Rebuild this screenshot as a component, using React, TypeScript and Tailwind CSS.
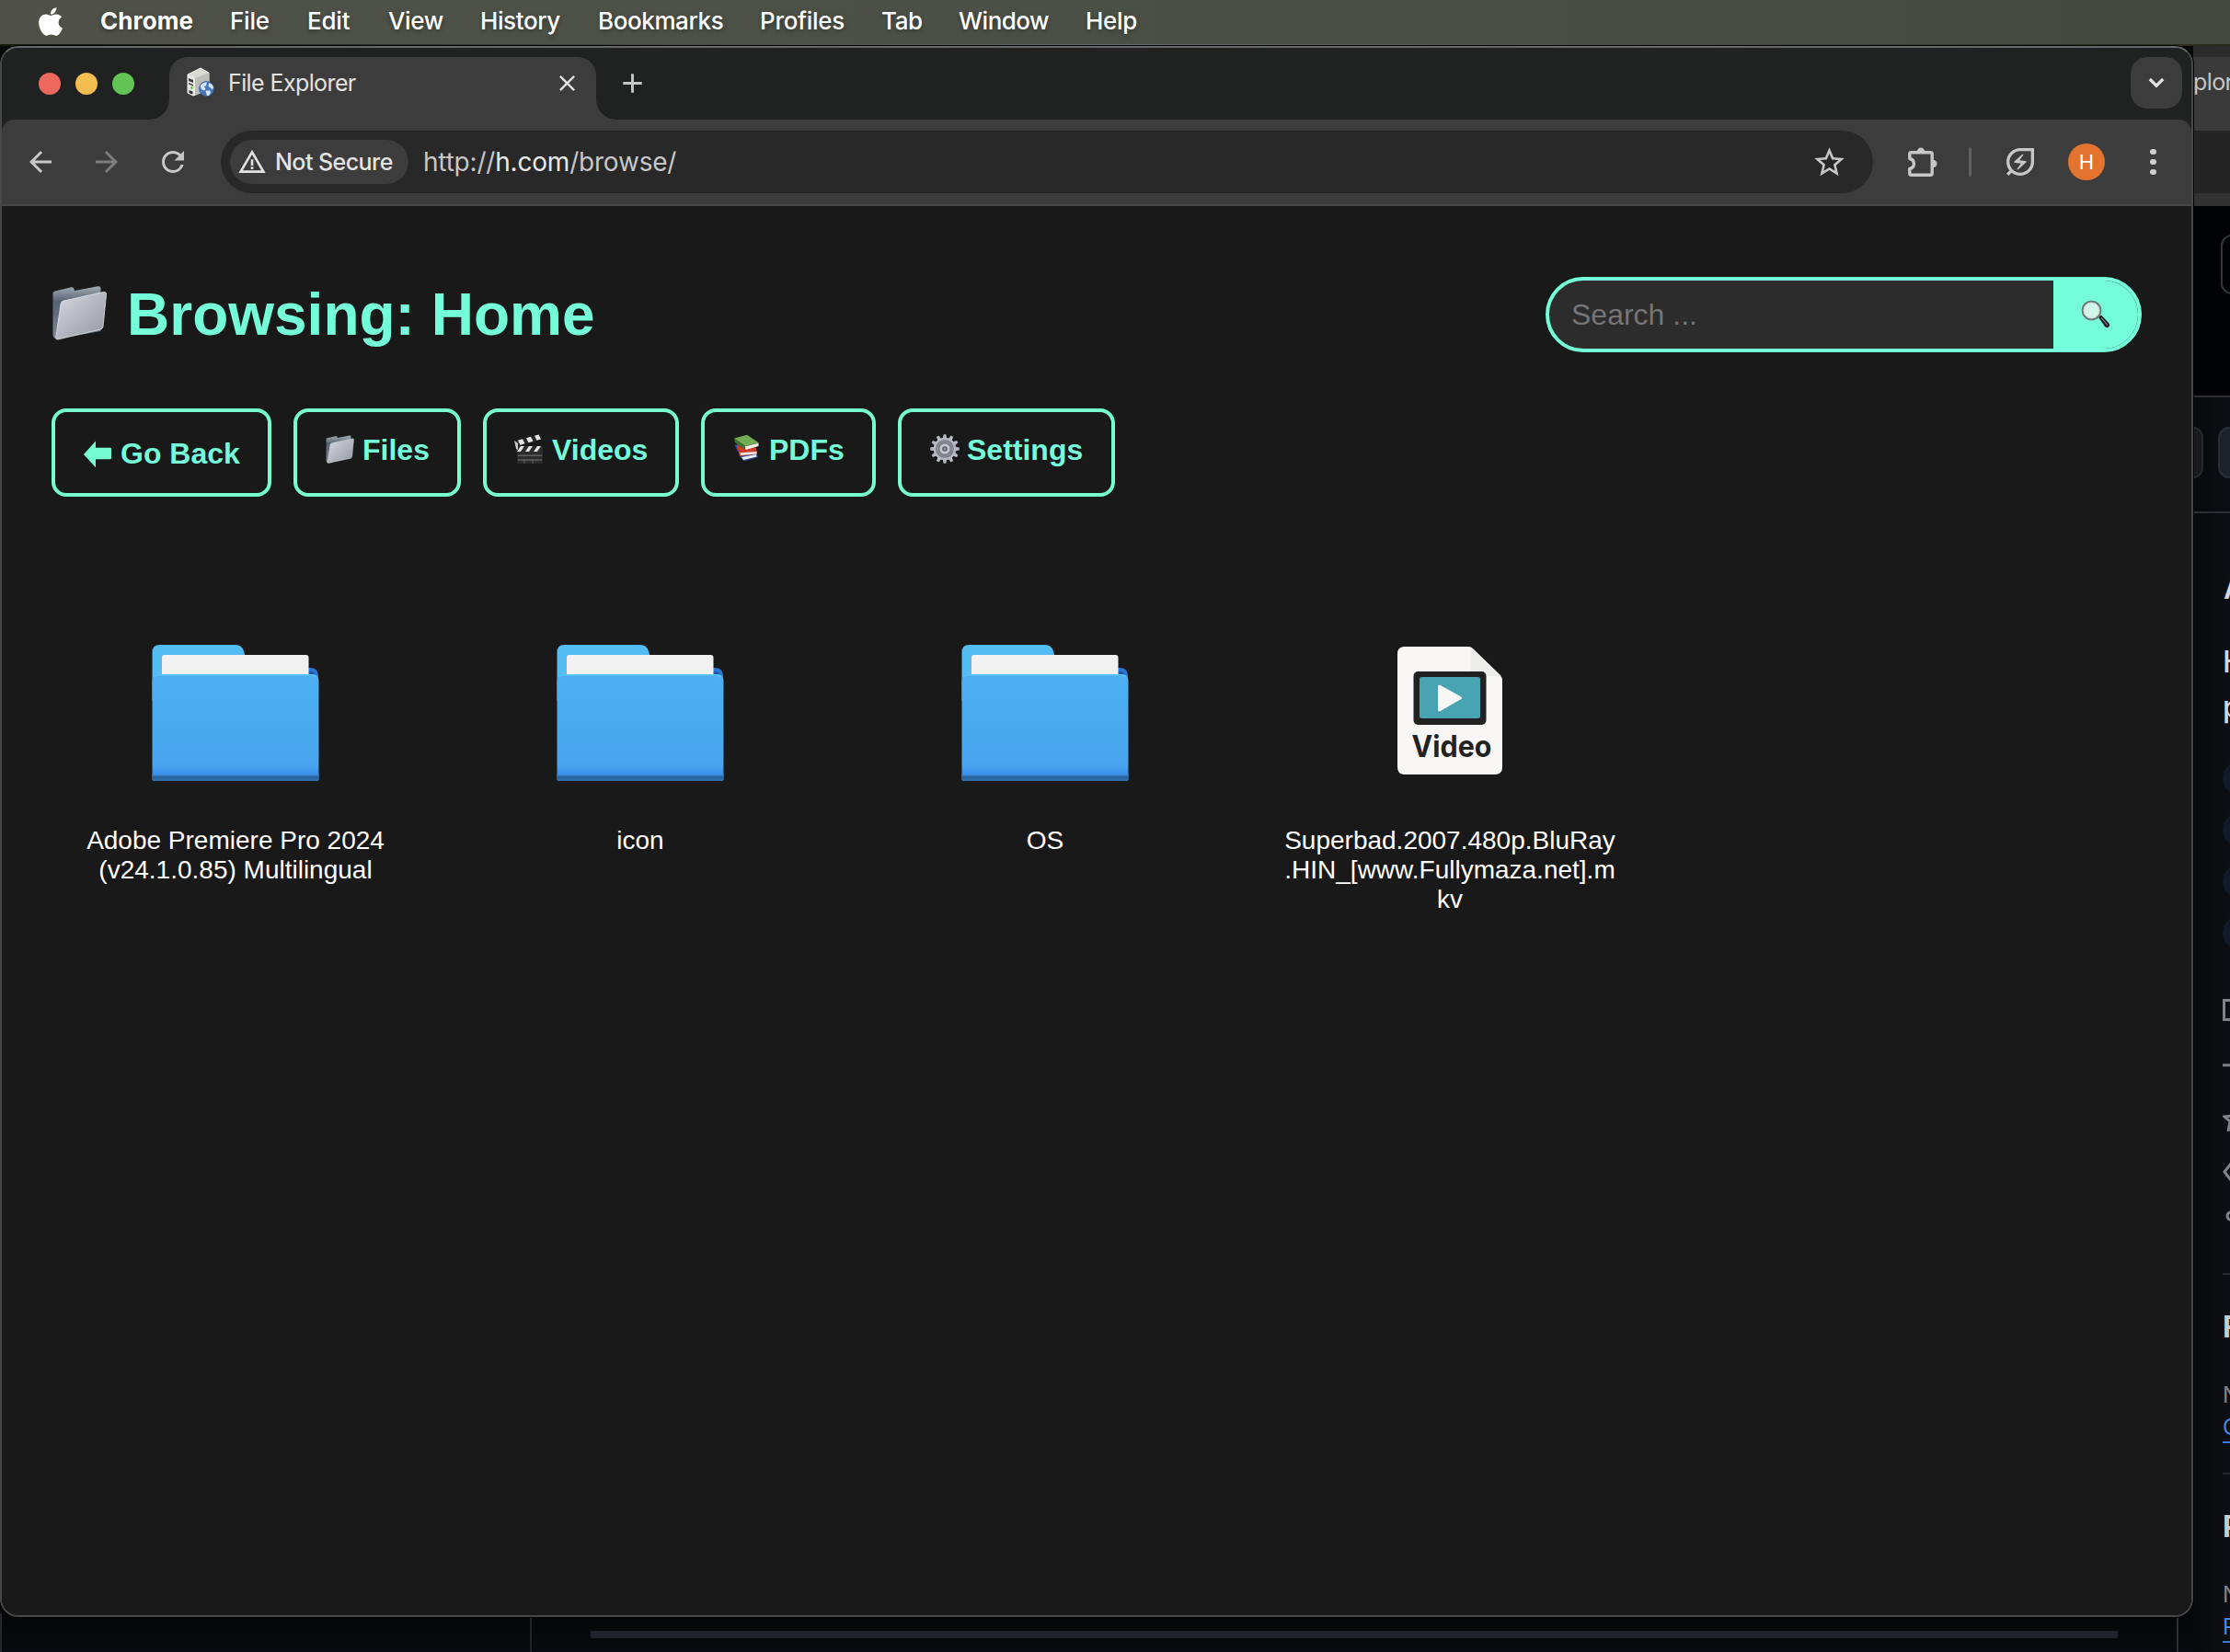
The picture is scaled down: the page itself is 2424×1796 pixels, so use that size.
import React from "react";
import { FaApple } from "react-icons/fa";
import {
  MdAdd,
  MdArrowBack,
  MdArrowForward,
  MdClose,
  MdOutlineEnergySavingsLeaf,
  MdRefresh,
  MdStarBorder,
  MdWarningAmber,
} from "react-icons/md";

const menus = [
  { label: "Chrome", cls: "w-[141px] font-bold tracking-[0.1px]" },
  { label: "File", cls: "w-[84px] font-medium tracking-[-0.2px]" },
  { label: "Edit", cls: "w-[88px] font-medium tracking-[-0.2px]" },
  { label: "View", cls: "w-[100px] font-medium tracking-[-0.4px]" },
  { label: "History", cls: "w-[128px] font-medium tracking-[-0.4px]" },
  { label: "Bookmarks", cls: "w-[176px] font-medium tracking-[-0.4px]" },
  { label: "Profiles", cls: "w-[132px] font-medium tracking-[-0.3px]" },
  { label: "Tab", cls: "w-[84px] font-medium tracking-[-0.4px]" },
  { label: "Window", cls: "w-[138px] font-medium tracking-[-0.5px]" },
  { label: "Help", cls: "font-medium tracking-[-0.3px]" },
];

function MenuBar() {
  return (
    <div className="flex h-12 items-center bg-linear-to-r from-[#4f5148] via-[#4b5046] to-[#45483f] text-[26px] leading-none text-white [text-shadow:0_2px_5px_rgba(0,0,0,0.35)]">
      <FaApple className="mr-[38px] ml-[39px] h-[35px] w-[32px] -translate-y-[1px]" />
      {menus.map((m) => (
        <span key={m.label} className={`${m.cls} -translate-y-[1px] whitespace-nowrap`}>
          {m.label}
        </span>
      ))}
    </div>
  );
}

function ServerIcon() {
  return (
    <svg viewBox="0 0 32 34" className="h-[34px] w-8">
      <path d="M2 8 16 1l9 5v18L8 31l-6-3z" fill="#d9d9d6" stroke="#f3f3f1" strokeWidth="1" />
      <path d="M2 8l8 4v19l-8-3z" fill="#e9e9e6" />
      <path d="M10 12l15-6v18L10 31z" fill="#bdbdb9" />
      <path d="M3 12l5 2v3l-5-2zM3 17l5 2v1.500l-5-2z" fill="#3c3c3c" />
      <circle cx="6.500" cy="22.500" r="1.500" fill="#7ac943" />
      <path d="M3.500 25l4 1.500v3l-4-1.500z" fill="#333" />
      <circle cx="22.500" cy="23.500" r="8" fill="#4877bd" stroke="#2f5596" strokeWidth=".6" />
      <path d="M16 20c2-3 5-4 7-3.500l-1 3.500-2 1 1.500 3-2 1.500-3-2zM25 17.500c3 0 5 2.500 5 5.500l-2 1-1.500-2-2-1zM21.500 25.500l4.500 0 1 2-2 3.500h-2z" fill="#dbe9f7" />
    </svg>
  );
}

function PuzzleIcon() {
  return (
    <svg viewBox="0 0 34 34" className="h-[34px] w-[34px]">
      <path
        d="M4.500 6.800H25.500Q27.200 6.800 27.200 8.500V29.500Q27.200 31.200 25.500 31.200H4.500Q2.800 31.200 2.800 29.500V24.500A5.600 5.600 0 0 0 2.800 13.500V8.500Q2.800 6.800 4.500 6.800Z"
        fill="none"
        stroke="#c7c7c7"
        strokeWidth="3.400"
        strokeLinejoin="round"
      />
      <path d="M10.800 6a4.200 4.600 0 0 1 8.400 0zM28 14.800a4.600 4.200 0 0 1 0 8.400z" fill="#c7c7c7" />
    </svg>
  );
}

function SilverFolder({ id, className }: { id: string; className: string }) {
  return (
    <svg viewBox="0 0 60 60" className={className}>
      <defs>
        <linearGradient id={`${id}-f`} x1="0" y1="0" x2="1" y2="1">
          <stop offset="0" stopColor="#d8dbe3" />
          <stop offset=".5" stopColor="#b4b7bf" />
          <stop offset="1" stopColor="#96999f" />
        </linearGradient>
        <linearGradient id={`${id}-b`} x1="0" y1="0" x2="0" y2="1">
          <stop offset="0" stopColor="#a2abb3" />
          <stop offset=".3" stopColor="#54616f" />
          <stop offset="1" stopColor="#7f8993" />
        </linearGradient>
      </defs>
      <path d="M1 9Q1 7 3 6.500L21 2.200Q23.500 1.800 24 4l.5 2L50 1.200Q53 .8 53 3.500V50L5 58.500Q1 58 1 53z" fill={`url(#${id}-b)`} />
      <path d="M9.500 20.500Q10 17.500 12.500 17L56 7.500Q59.500 7 59 10.500L55.500 45Q55.200 47.500 53 48L6.500 59Q4 59.500 4.300 56.500z" fill={`url(#${id}-f)`} stroke="#dfe2e8" strokeWidth=".8" />
    </svg>
  );
}

function Clapper() {
  return (
    <svg viewBox="0 0 32 34" className="h-[34px] w-8">
      <path d="M1 8.500 28.500 1l1.500 5.500L3 14z" fill="#2a2a2a" />
      <path d="M4 7.700l5-1.400 2.500 5-5 1.400zM13 5.200l5-1.400 2.500 5-5 1.400zM22 2.800l4.500-1.200 2.500 5-4.500 1.200z" fill="#e4e4e4" />
      <rect x="3" y="14" width="28" height="19" rx="1.500" fill="#2c2c2c" />
      <path d="M3 20l4-6h4l-4 6zM12 20l4-6h4l-4 6zM21 20l4-6h4l-4 6z" fill="#e4e4e4" />
      <path d="M4 24.200h26M4 29h26" stroke="#777" strokeWidth="1" />
      <path d="M11 29v4M20 29v4" stroke="#6c6c6c" strokeWidth=".8" />
      <path d="M0 8l4 3 0 7-2-1z" fill="#c9c9c9" />
    </svg>
  );
}

function Books() {
  return (
    <svg viewBox="0 0 30 30" className="h-[30px] w-[30px]">
      <path d="M7 24l2-3 16-2 2 6-15 4.500z" fill="#2b4c9b" />
      <path d="M9 25l16-3 .5 2.500L11 28z" fill="#ececec" />
      <path d="M1.500 12l4-1 6 9-4 3z" fill="#2f55a8" />
      <path d="M4 12l21 2.500 1 7-19 2.500z" fill="#cf3a29" />
      <path d="M7.500 20.200l18-1.200v2.500l-17.500 1.500z" fill="#f0e7e4" />
      <path d="M1 4.500 15 .8 28 9.500 13 13z" fill="#72ac53" />
      <path d="M1 4.500 13 13v4L2 9z" fill="#3f7330" />
      <path d="M13 13.200l14.500-3.400v3.200L13.500 17z" fill="#f3f3ee" />
    </svg>
  );
}

function Gear() {
  const teeth = Array.from({ length: 12 }, (_, i) => i * 30);
  return (
    <svg viewBox="0 0 32 32" className="h-8 w-8">
      {teeth.map((a) => (
        <path key={a} d="M13.800 5 14.600.2h2.800L18.200 5z" fill="#b6bac4" transform={`rotate(${a} 16 16)`} />
      ))}
      <circle cx="16" cy="16" r="11" fill="#6d7077" stroke="#b6bac4" strokeWidth="2.400" />
      <circle cx="16" cy="16" r="8.400" fill="#7e8187" stroke="#94979e" strokeWidth="1" />
      <circle cx="16" cy="16" r="4.200" fill="#4c4e54" stroke="#c4c8d1" strokeWidth="2.800" />
      <circle cx="16" cy="16" r="1.800" fill="#8c8f96" />
    </svg>
  );
}

function Magnifier() {
  return (
    <svg viewBox="0 0 34 34" className="h-[34px] w-[34px]">
      <path d="M20 20l3-2.500 8.500 9q1.500 2.500-.5 4t-4-.5z" fill="#1e1e22" />
      <path d="M23 20.500l7 8" stroke="#77777c" strokeWidth="1.200" />
      <circle cx="12.500" cy="12.500" r="9.800" fill="#d2f6ea" stroke="#6e7375" strokeWidth="2" />
      <circle cx="12.500" cy="12.500" r="8.600" fill="none" stroke="#c3cccb" strokeWidth="1" />
    </svg>
  );
}

function BlueFolder({ id }: { id: string }) {
  return (
    <svg viewBox="0 0 182 148" className="h-[148px] w-[182px]">
      <defs>
        <linearGradient id={`${id}-g`} x1="0" y1="0" x2="0" y2="1">
          <stop offset="0" stopColor="#4cb0f3" />
          <stop offset=".6" stopColor="#49a9ee" />
          <stop offset=".85" stopColor="#48a4ef" />
          <stop offset=".94" stopColor="#3b90e8" />
          <stop offset="1" stopColor="#3a8fe8" />
        </linearGradient>
        <linearGradient id={`${id}-s`} x1="0" y1="0" x2="0" y2="1">
          <stop offset="0" stopColor="#3a8de2" />
          <stop offset=".4" stopColor="#2a6298" />
          <stop offset="1" stopColor="#2e74b3" />
        </linearGradient>
      </defs>
      <path d="M.5 8Q.5 0 8.500 0H91Q98 0 100 7L102 14V60H.5z" fill="#53bcf2" />
      <path d="M165 25H172Q181 25 181 34V60H165z" fill="#2a76d2" />
      <path d="M168 29H173Q178 30 179 36H168z" fill="#1f56a6" />
      <rect x="11" y="11" width="159.500" height="40" rx="3" fill="#f1f1f1" />
      <path d="M0.500 40Q1 32 6 32H175Q181 32 181.500 40V146Q181.500 148 179.500 148H2.500Q.5 148 .5 146z" fill={`url(#${id}-g)`} />
      <path d="M3 35Q4 32.800 8 32.800H173Q178 32.800 179 35" fill="none" stroke="#5dc3f6" strokeWidth="1.500" />
      <path d="M.5 141H181.500V146Q181.500 148 179.500 148H2.500Q.5 148 .5 146z" fill={`url(#${id}-s)`} />
    </svg>
  );
}

function VideoFile() {
  return (
    <svg viewBox="0 0 114 139" className="mb-[5px] h-[139px] w-[114px]">
      <path d="M8 0H77Q80 0 82 2L111.500 31Q114 33.500 114 36.500V131Q114 139 106 139H8Q0 139 0 131V8Q0 0 8 0z" fill="#f8f7f5" />
      <path d="M79.500.5 113 32H82Q79.500 32 79.500 29z" fill="#ededeb" />
      <rect x="17.500" y="27" width="79" height="58" rx="5" fill="#212121" />
      <rect x="24" y="33" width="66" height="45" rx="2.500" fill="#48a4b3" />
      <path d="M45.500 43 68.500 55.700 45.500 69z" fill="#f8f7f5" stroke="#f8f7f5" strokeWidth="3" strokeLinejoin="round" />
      <text x="15.500" y="120" textLength="87" lengthAdjust="spacingAndGlyphs" fontFamily="Inter, sans-serif" fontWeight="700" fontSize="32.500" fill="#222">
        Video
      </text>
    </svg>
  );
}

function TabStrip() {
  return (
    <div className="flex h-[78px] items-start bg-[#202221]">
      <div className="flex h-full w-[160px] items-center gap-4 pl-10">
        <span className="h-6 w-6 rounded-full bg-[#ed695e]" />
        <span className="h-6 w-6 rounded-full bg-[#f4bd50]" />
        <span className="h-6 w-6 rounded-full bg-[#61c454]" />
      </div>
      <div className="h-full w-[22px] bg-[#3c3c3c]">
        <div className="h-full rounded-br-[22px] bg-[#202221]" />
      </div>
      <div className="mt-[10px] flex h-[68px] w-[464px] items-start rounded-t-[20px] bg-[#3c3c3c] pt-[11px] pr-[17px] pl-[18px]">
        <ServerIcon />
        <span className="ml-[14px] text-[25px] leading-[34px] font-normal tracking-[-0.6px] text-[#e3e3e3]">File Explorer</span>
        <MdClose className="mt-[3px] ml-auto h-[29px] w-[29px] text-[#e3e3e3]" />
      </div>
      <div className="h-full w-[22px] bg-[#3c3c3c]">
        <div className="h-full rounded-bl-[22px] bg-[#202221]" />
      </div>
      <MdAdd className="mt-[21px] h-[35px] w-[35px] text-[#c7c7c7]" />
      <div className="mt-[10px] mr-[10px] ml-auto flex h-14 w-14 items-center justify-center rounded-[18px] bg-[#3c3c3c]">
        <svg viewBox="0 0 18 12" className="h-3 w-[18px]" fill="none" stroke="#e3e3e3" strokeWidth="3.200">
          <path d="M1.800 2 9 9.200 16.200 2" />
        </svg>
      </div>
    </div>
  );
}

function Toolbar() {
  return (
    <div className="bg-[#202221]">
      <div className="flex h-[94px] items-center rounded-t-[14px] border-b-2 border-[#474747] bg-[#3c3c3c] text-[#c7c7c7]">
        <MdArrowBack className="ml-6 h-9 w-9" />
        <MdArrowForward className="ml-9 h-9 w-9 text-[#7d7d7d]" />
        <MdRefresh className="ml-9 h-9 w-9" />
        <div className="ml-[34px] flex h-[68px] w-[1796px] items-center rounded-full bg-[#282828] pl-[10px]">
          <div className="flex h-12 w-[194px] items-center rounded-full bg-[#3c3c3c] pl-[8px] text-[#e3e3e3]">
            <MdWarningAmber className="h-8 w-8" />
            <span className="ml-[9px] text-[25px] leading-none font-medium tracking-[-0.55px] whitespace-nowrap">Not Secure</span>
          </div>
          <span className="ml-4 text-[28px] leading-none tracking-[-0.2px] text-[#c7c7c7]">
            http://<span className="text-[#e8e8e8]">h.com</span>/browse/
          </span>
          <MdStarBorder className="mr-[28px] ml-auto h-[39px] w-[39px]" />
        </div>
        <div className="ml-[37px]">
          <PuzzleIcon />
        </div>
        <div className="ml-[33px] h-8 w-[3px] rounded-full bg-[#606060]" />
        <MdOutlineEnergySavingsLeaf className="ml-[33px] h-10 w-10" />
        <div className="ml-8 flex h-10 w-10 items-center justify-center rounded-full bg-[#e3742f] text-[22px] leading-none text-white">H</div>
        <div className="ml-[49px] flex flex-col gap-[4.500px]">
          <span className="h-[6.500px] w-[6.500px] rounded-full bg-[#d0d0d0]" />
          <span className="h-[6.500px] w-[6.500px] rounded-full bg-[#d0d0d0]" />
          <span className="h-[6.500px] w-[6.500px] rounded-full bg-[#d0d0d0]" />
        </div>
      </div>
    </div>
  );
}

function NavButton({ width, children }: { width: string; children: React.ReactNode }) {
  return (
    <button className={`${width} flex h-24 items-start rounded-2xl border-4 border-[#75fcd0] pt-[23px] text-[32px] leading-[36px] font-bold whitespace-nowrap`}>
      {children}
    </button>
  );
}

function FileItem({ icon, lines }: { icon: React.ReactNode; lines: string[] }) {
  return (
    <div className="flex w-[400px] flex-col items-center">
      <div className="flex h-[200px] w-[200px] items-center justify-center">{icon}</div>
      <div className="mt-[23px] text-center text-[28px] leading-8 text-white">
        {lines.map((l) => (
          <div key={l} className="whitespace-nowrap">
            {l}
          </div>
        ))}
      </div>
    </div>
  );
}

function Page() {
  return (
    <div className="grow bg-[#191919] px-[54px] font-['Liberation_Sans',Arial,sans-serif] text-[#75fcd8]">
      <div className="mt-[76px] flex h-[83px] items-center justify-between">
        <h1 className="flex items-center text-[64px] leading-[74px] font-bold">
          <SilverFolder id="title" className="mr-[21px] h-[60px] w-[61px] -translate-y-[2px]" />
          <span>Browsing: Home</span>
        </h1>
        <div className="flex h-[82px] w-[648px] overflow-hidden rounded-full border-4 border-[#75fcd8] bg-[#2c2c2c]">
          <div className="flex grow items-center pl-6 text-[32px] leading-none text-[#757575]">Search ...</div>
          <div className="flex w-[92px] items-center bg-[#75fcd8] pl-[29px]">
            <Magnifier />
          </div>
        </div>
      </div>
      <div className="mt-[61px] flex gap-6">
        <NavButton width="w-[239px]">
          <svg viewBox="0 0 30 32" className="mt-[7px] mr-[10px] ml-[31px] h-8 w-[30px]">
            <path d="M0 16 13 0V8H28.500Q30 8 30 9.500V20.500Q30 22 28.500 22H13V32z" fill="#75fcd0" transform="translate(0 1.500) scale(1 .9)" />
          </svg>
          <span className="mt-1">Go Back</span>
        </NavButton>
        <NavButton width="w-[182px]">
          <SilverFolder id="nav" className="mt-[2px] mr-[9px] ml-[31px] h-[31px] w-[31px]" />
          <span>Files</span>
        </NavButton>
        <NavButton width="w-[213px]">
          <span className="mr-[9px] ml-[30px]">
            <Clapper />
          </span>
          <span>Videos</span>
        </NavButton>
        <NavButton width="w-[190px]">
          <span className="mt-[1px] mr-[9px] ml-[31px]">
            <Books />
          </span>
          <span>PDFs</span>
        </NavButton>
        <NavButton width="w-[236px]">
          <span className="mt-[1px] mr-[8px] ml-[31px]">
            <Gear />
          </span>
          <span>Settings</span>
        </NavButton>
      </div>
      <div className="mt-[135px] flex gap-10">
        <FileItem icon={<BlueFolder id="a" />} lines={["Adobe Premiere Pro 2024", "(v24.1.0.85) Multilingual"]} />
        <FileItem icon={<BlueFolder id="b" />} lines={["icon"]} />
        <FileItem icon={<BlueFolder id="c" />} lines={["OS"]} />
        <FileItem icon={<VideoFile />} lines={["Superbad.2007.480p.BluRay", ".HIN_[www.Fullymaza.net].m", "kv"]} />
      </div>
    </div>
  );
}

function SideText({ cls, children }: { cls: string; children: React.ReactNode }) {
  return <div className={`${cls} flex items-end leading-none`}>{children}</div>;
}

/* Window partly hidden behind the browser: only its right edge and bottom show. */
function BackWindow() {
  return (
    <div className="absolute inset-x-0 top-[50px] bottom-0 bg-[#07090c]">
      <div className="absolute bottom-0 left-0 flex h-[42px] w-[2384px] border-l-2 border-[#23272b] bg-linear-to-b from-[#050607] to-[#080b0f]">
        <div className="w-[576px] border-r-2 border-[#202328]" />
        <div className="mt-[19px] ml-[64px] h-2 w-[1660px] bg-[#202329]" />
        <div className="ml-[64px] w-[2px] bg-[#2a2d32]" />
      </div>
      <div className="absolute inset-y-0 right-0 flex w-10 flex-col overflow-hidden bg-linear-to-r from-[#07090c] to-[#0c0f14]">
        <div className="h-3 shrink-0 bg-[#2b2b2b]" />
        <div className="h-20 shrink-0 bg-[#3a3a3a] pt-[10px] text-[25px] leading-[34px] tracking-[-0.6px] text-[#c5c5c5]">plor</div>
        <div className="h-[68px] shrink-0 bg-[#242424]" />
        <div className="h-[14px] shrink-0 bg-[#323232]" />
        <div className="h-[206px] shrink-0 bg-[#010205] pt-[31px] pl-[30px]">
          <div className="h-[65px] w-[80px] rounded-xl border-2 border-[#30363d]" />
        </div>
        <div className="flex h-[128px] shrink-0 items-start gap-4 border-y-2 border-[#2b2f34] pt-8">
          <div className="h-14 w-[11px] shrink-0 rounded-r-xl border-2 border-l-0 border-[#26292e] bg-[#171a1f]" />
          <div className="h-14 w-[60px] shrink-0 rounded-xl border-2 border-[#282c33] bg-[#1d2129]" />
        </div>
        <div className="flex shrink-0 flex-col pl-[33px]">
          <SideText cls="h-[98px] text-[32px] font-semibold text-[#d5d9de]">A</SideText>
          <SideText cls="h-[80px] -ml-[1px] text-[32px] font-medium text-[#d5d9de]">H</SideText>
          <SideText cls="h-[49px] -ml-[1px] text-[32px] font-medium text-[#d5d9de]">p</SideText>
          <div className="mt-[43px] -ml-[1px] flex flex-col gap-5">
            {[0, 1, 2, 3].map((i) => (
              <div key={i} className="h-9 w-[80px] rounded-full bg-[#111a2a]" />
            ))}
          </div>
          <svg viewBox="0 0 8 250" className="mt-[52px] -ml-[1px] h-[250px] w-2" fill="none" stroke="#7f848b" strokeWidth="3">
            <path d="M10 3.500H1.500V24.500H10M0 74H8M10 129 2 130 8 135 6 146M9 181 2 190l7 9M9 234a4 4 0 1 0 0 8" />
          </svg>
          <div className="mt-[50px] -ml-[1px] h-0.5 bg-[#25282d]" />
        </div>
        {["C", "P"].map((c, i) => (
          <div key={c} className="flex h-[217px] shrink-0 flex-col pl-[33px]">
            <SideText cls="h-[73px] -ml-[1px] text-[32px] font-bold text-[#c9cdd2]">{i === 0 ? "R" : "P"}</SideText>
            <SideText cls="h-[70px] -ml-[1px] text-[24px] text-[#7f848b]">N</SideText>
            <div className="-ml-[1px] flex h-[40px] items-end border-b-2 border-[#3f78cf] text-[24px] leading-[30px] text-[#4a86e0]">{c}</div>
            {i === 0 && <div className="mt-[32px] -ml-[1px] h-0.5 bg-[#25282d]" />}
          </div>
        ))}
      </div>
    </div>
  );
}

export default function App() {
  return (
    <div className="relative h-[1796px] w-[2424px] overflow-hidden bg-[#1b1e16] font-['Inter',sans-serif]">
      <MenuBar />
      <div className="h-[2px] bg-linear-to-r from-[#141a0c] via-[#5f6a70] to-[#2a2a1c]" />
      <BackWindow />
      <div className="absolute top-[50px] left-0 flex h-[1708px] w-[2384px] flex-col overflow-hidden rounded-[20px] border-2 border-[#484848] border-t-[#676a69] bg-[#191919] shadow-[0_0_0_1px_#000]">
        <TabStrip />
        <Toolbar />
        <Page />
      </div>
    </div>
  );
}
